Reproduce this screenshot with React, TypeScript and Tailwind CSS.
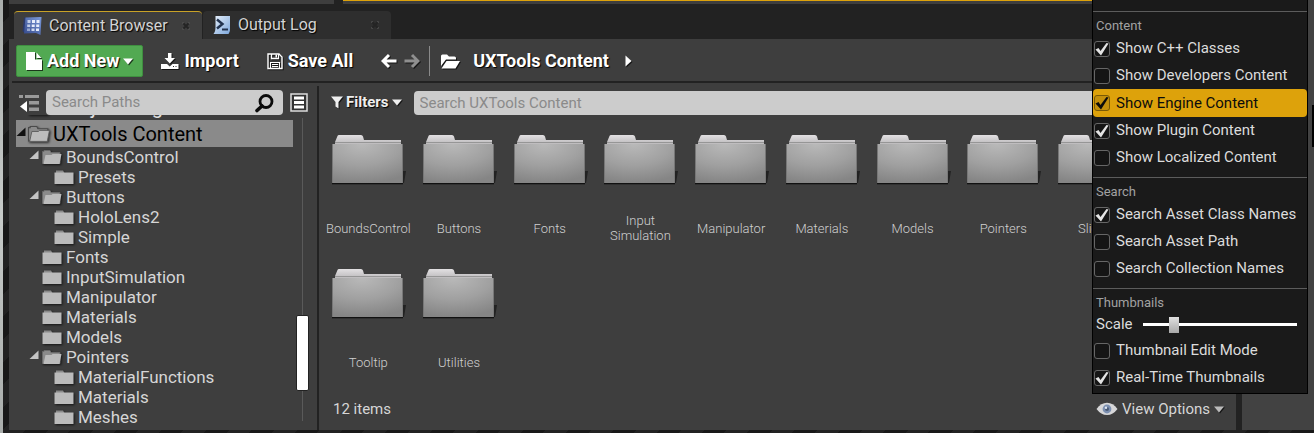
import React, { useState } from "react";

const shadow = "[text-shadow:1px_1px_1px_#000]";
const dropShadow = "drop-shadow-[1px_1px_0_#000000aa]";

function ContentBrowserIcon() {
  return (
    <svg width="20" height="20" viewBox="0 0 20 20" aria-hidden="true">
      <defs>
        <linearGradient id="browser" x1="0" y1="1" x2="1" y2="0">
          <stop offset="0" stopColor="#34498a" />
          <stop offset="1" stopColor="#7c9bdc" />
        </linearGradient>
      </defs>
      <path d="M2 1.500 L5 1.500 L4 17 L0.500 15.500 Z" fill="#2b3a6b" />
      <path d="M3.500 1.500 L19.500 1 L18.500 19 L14 17 L2 17.500 Z" fill="url(#browser)" />
      <g fill="#e6edfb">
        <rect x="5.500" y="4" width="3" height="3" opacity="0.75" />
        <rect x="10" y="4" width="3" height="3" />
        <rect x="14.500" y="4" width="3" height="3" />
        <rect x="5.200" y="8.500" width="3" height="2.500" opacity="0.75" />
        <rect x="9.700" y="8.500" width="3" height="2.500" />
        <rect x="14.200" y="8.500" width="3" height="2.500" />
        <rect x="5" y="12.500" width="3" height="2.500" opacity="0.5" />
        <rect x="9.500" y="12.500" width="3" height="2.500" opacity="0.85" />
        <rect x="14" y="12.500" width="3" height="2.500" />
      </g>
    </svg>
  );
}

function OutputLogIcon() {
  return (
    <svg width="18" height="20" viewBox="0 0 18 20" aria-hidden="true">
      <defs>
        <linearGradient id="log" x1="0" y1="0" x2="1" y2="1">
          <stop offset="0" stopColor="#e8f1fb" />
          <stop offset="1" stopColor="#7da7dc" />
        </linearGradient>
      </defs>
      <path d="M2.500 1 H17 V14 C17 16 16.500 17.500 15.500 19 H0.500 C2 17 2.500 15 2.500 12 Z" fill="url(#log)" />
      <path d="M4 4.500 L9.500 9 L4 13.500" fill="none" stroke="#22334f" strokeWidth="2.400" />
      <path d="M9 14.500 H15" stroke="#22334f" strokeWidth="2" />
    </svg>
  );
}

function CloseIcon() {
  return (
    <svg width="8" height="8" viewBox="0 0 8 8" aria-hidden="true">
      <path d="M1.500 1.500 L6.500 6.500 M6.500 1.500 L1.500 6.500" stroke="#242424" strokeWidth="1.800" />
      <path d="M0.500 2 V0.500 H2 M6 0.500 H7.500 V2 M7.500 6 V7.500 H6 M2 7.500 H0.500 V6" fill="none" stroke="#515151" strokeWidth="0.700" />
    </svg>
  );
}

function FileIcon() {
  return (
    <svg className={dropShadow} width="17" height="19" viewBox="0 0 17 19" aria-hidden="true">
      <path d="M0 0 H9 V7.500 H16 V18 H0 Z" fill="#fff" />
      <path d="M10.500 0.500 L15.500 6 H10.500 Z" fill="#fff" />
    </svg>
  );
}

function Caret({ className = "" }: { className?: string }) {
  return (
    <svg className={`${dropShadow} ${className}`} width="10" height="7" viewBox="0 0 10 7" aria-hidden="true">
      <path d="M0 0.500 H10 L5 6.500 Z" fill="currentColor" />
    </svg>
  );
}

function ImportIcon() {
  return (
    <svg className={dropShadow} width="18" height="17" viewBox="0 0 18 17" aria-hidden="true">
      <path d="M7 0 H10.500 V5 H14 L8.800 10.500 L3.500 5 H7 Z" fill="#fff" />
      <path d="M0 11 H6 L8.800 13.500 L11.500 11 H17.500 V16 H0 Z" fill="#fff" />
      <path d="M12 13.500 H13 M14.500 13.500 H15.500" stroke="#333" />
    </svg>
  );
}

function SaveIcon() {
  return (
    <svg className={dropShadow} width="17" height="17" viewBox="0 0 17 17" aria-hidden="true">
      <path d="M1 1 H12 L15 4 V15.500 H1 Z" fill="none" stroke="#fff" strokeWidth="1.400" />
      <path d="M4.500 1 V5.500 H11.500 V1" fill="none" stroke="#fff" strokeWidth="1.300" />
      <path d="M8.500 1.500 H10 V4.500 H8.500Z" fill="#fff" />
      <path d="M3.500 15 V9.500 H12.500 V15 M5 11.500 H11 M5 13.500 H11" fill="none" stroke="#fff" strokeWidth="1.100" />
    </svg>
  );
}

function ArrowIcon({ forward = false }: { forward?: boolean }) {
  return (
    <svg className={dropShadow} width="16" height="16" viewBox="0 0 16 16" aria-hidden="true">
      <path
        d={forward ? "M0.500 8 H13 M8 2 L14 8 L8 14" : "M15.500 8 H3 M8 2 L2 8 L8 14"}
        fill="none"
        stroke={forward ? "#8f8f8f" : "#fff"}
        strokeWidth="3"
      />
    </svg>
  );
}

function OpenFolderIcon() {
  return (
    <svg className={dropShadow} width="19" height="15" viewBox="0 0 19 15" aria-hidden="true">
      <path d="M0 12 V2 Q0 0.500 1.500 0.500 H6 L8 2.500 H13.500 Q15 2.500 15 4 V5.500 H5 Z" fill="#fff" />
      <path d="M5.500 7 H19 L14.500 14.500 H0.500 Z" fill="#fff" />
    </svg>
  );
}

function CollapseIcon() {
  return (
    <svg width="20" height="18" viewBox="0 0 20 18" aria-hidden="true">
      <g fill="#9a9a9a">
        <rect x="0" y="1" width="4" height="3" />
        <rect x="6" y="1" width="14" height="3" />
        <rect x="10" y="7" width="10" height="3.500" />
        <rect x="10" y="13.500" width="10" height="3.500" />
      </g>
      <path d="M8 7 V18 L1 12.500 Z" fill="#fff" />
    </svg>
  );
}

function SearchIcon() {
  return (
    <svg width="20" height="20" viewBox="0 0 20 20" aria-hidden="true">
      <circle cx="11" cy="8.500" r="6" fill="none" stroke="#0b0b0b" strokeWidth="2.800" />
      <path d="M7 13 L2 17.500" stroke="#0b0b0b" strokeWidth="3.600" strokeLinecap="round" />
    </svg>
  );
}

function SourcesIcon() {
  return (
    <svg width="18" height="19" viewBox="0 0 18 19" aria-hidden="true">
      <rect x="1" y="1" width="16" height="17" fill="#333" stroke="#ddd" strokeWidth="1.500" />
      <g fill="#fff">
        <rect x="4" y="3.500" width="10" height="3" />
        <rect x="4" y="8" width="10" height="3" />
        <rect x="4" y="12.500" width="10" height="3" />
      </g>
    </svg>
  );
}

function FilterIcon() {
  return (
    <svg className={dropShadow} width="12" height="13" viewBox="0 0 12 13" aria-hidden="true">
      <path d="M0 0.500 H12 L7.500 6 V12.500 L4.500 10.500 V6 Z" fill="#eee" />
    </svg>
  );
}

function TreeFolder({ open, outlined, size = 20 }: { open?: boolean; outlined?: boolean; size?: number }) {
  return (
    <svg className="shrink-0 drop-shadow-[1px_1px_1px_#000000aa]" width={size} height={size * 0.75} viewBox="0 0 20 15" aria-hidden="true">
      {open ? (
        <>
          <path d="M0.500 13.500 V1.500 H2 V0.500 H8 L9 2.500 H18 V13.500 Z" fill="#8b8b8b" stroke={outlined ? "#4a4a4a" : "#6a6a6a"} />
          <path
            d="M3.500 5 H9.500 L10.500 4 H19.500 L17.500 14 H1.500 Z"
            fill="#bcbcbc"
            stroke={outlined ? "#5a5a5a" : "none"}
            strokeWidth="0.800"
          />
        </>
      ) : (
        <>
          <path d="M2 3 V0.500 H9 L10.500 3 Z" fill="#8b8b8b" />
          <path d="M0.500 2.500 H19.500 V14 H0.500 Z" fill="#bbb" />
        </>
      )}
    </svg>
  );
}

function Expander({ color }: { color: string }) {
  return (
    <svg className="shrink-0" width="10" height="10" viewBox="0 0 10 10" aria-hidden="true">
      <path d="M9.500 0.500 V9 H0.500 Z" fill={color} />
    </svg>
  );
}

function BigFolder() {
  return (
    <svg width="76" height="50" viewBox="0 0 76 50" aria-hidden="true">
      <defs>
        <radialGradient id="front" cx="0.42" cy="0" r="1">
          <stop offset="0" stopColor="#b9b9b9" />
          <stop offset="0.55" stopColor="#a0a0a0" />
          <stop offset="1" stopColor="#858585" />
        </radialGradient>
        <linearGradient id="tab" x1="0" y1="0" x2="0" y2="1">
          <stop offset="0" stopColor="#e2e0e2" />
          <stop offset="1" stopColor="#bdbbbd" />
        </linearGradient>
      </defs>
      <path d="M72 36 H76 L74 48 H72 Z" fill="#222" />
      <path d="M5 9 V7 L7.500 1 Q7.800 0 9 0 H31 Q32.500 0 33 1.500 L34 5 H71 V9 Z" fill="url(#tab)" />
      <path d="M5 7.500 H71" stroke="#969696" />
      <rect x="2" y="48" width="71" height="1.300" fill="#111" />
      <rect x="2" y="9" width="71" height="39" fill="url(#front)" />
      <path d="M2.500 9 V48 M72.500 9 V48" stroke="#777" />
    </svg>
  );
}

function EyeIcon() {
  return (
    <svg width="22" height="14" viewBox="0 0 22 14" aria-hidden="true">
      <path d="M0.500 7 Q5 0.800 11 0.800 Q17 0.800 21.500 7 Q17 13 11 13 Q5 13 0.500 7 Z" fill="#d6d6d8" />
      <circle cx="11" cy="7" r="4.400" fill="#7b8fb0" />
      <circle cx="11" cy="7" r="2" fill="#4a5a75" />
      <circle cx="10" cy="5.800" r="1.200" fill="#dfe7f2" />
    </svg>
  );
}

type Node = { name: string; depth: number; open?: boolean };

const tree: Node[] = [
  { name: "BoundsControl", depth: 1, open: true },
  { name: "Presets", depth: 2 },
  { name: "Buttons", depth: 1, open: true },
  { name: "HoloLens2", depth: 2 },
  { name: "Simple", depth: 2 },
  { name: "Fonts", depth: 1 },
  { name: "InputSimulation", depth: 1 },
  { name: "Manipulator", depth: 1 },
  { name: "Materials", depth: 1 },
  { name: "Models", depth: 1 },
  { name: "Pointers", depth: 1, open: true },
  { name: "MaterialFunctions", depth: 2 },
  { name: "Materials", depth: 2 },
  { name: "Meshes", depth: 2 },
];

const folders = [
  "BoundsControl",
  "Buttons",
  "Fonts",
  "Input Simulation",
  "Manipulator",
  "Materials",
  "Models",
  "Pointers",
  "Slider",
  "",
  "Tooltip",
  "Utilities",
];

function Tab({ icon, label, active }: { icon: React.ReactNode; label: string; active?: boolean }) {
  return (
    <div
      className={`flex h-7 w-[188px] items-center rounded-t-sm pr-3 ${
        active ? "border-t border-[#c9a227] bg-[#3e3e3e] pl-2" : "bg-[#2e2e2e] pl-[10px]"
      }`}
    >
      <button type="button" className={`flex items-center gap-[7px] text-base text-[#d4d4d4] ${shadow}`}>
        {icon}
        {label}
      </button>
      <button type="button" aria-label={`Close ${label}`} className="ml-auto">
        <CloseIcon />
      </button>
    </div>
  );
}

function RootRow({ name, selected }: { name: string; selected?: boolean }) {
  return (
    <li
      className={`flex h-[27px] items-center text-xl ${
        selected ? "bg-[#8a8a8a] text-black" : "text-[#e0e0e0]"
      }`}
    >
      <span className="flex pb-1">
        <Expander color={selected ? "#111" : "#ccc"} />
      </span>
      <span className="mx-[2px] flex pt-[2px]">
        <TreeFolder open outlined size={22} />
      </span>
      <span className="pl-px pt-px">{name}</span>
    </li>
  );
}

function TreeRow({ node }: { node: Node }) {
  return (
    <li className={`flex h-5 items-center text-[17px] text-[#d6d6d6] ${node.depth === 2 ? "pl-6" : "pl-3"}`}>
      <span className="flex w-[14px] shrink-0 pb-1 pl-px">{node.open && <Expander color="#c4c4c4" />}</span>
      <TreeFolder open={node.open} />
      <span className="pl-1 pt-[2px]">{node.name}</span>
    </li>
  );
}

function CheckRow({ label, initial, highlighted }: { label: string; initial?: boolean; highlighted?: boolean }) {
  const [checked, setChecked] = useState(!!initial);
  return (
    <label
      className={`flex items-center gap-[6px] rounded-sm pl-px text-[15px] ${
        highlighted ? "h-7 bg-[#dda20b] text-[#0c0c0c]" : "h-[27px] text-[#dcdcdc]"
      }`}
    >
      <span className="relative flex">
        <input
          type="checkbox"
          checked={checked}
          onChange={(e) => setChecked(e.target.checked)}
          className={`size-4 appearance-none rounded-[3px] border ${
            highlighted ? "border-[#7a5a06] bg-[#c4900c]" : "border-[#666] bg-[#151515]"
          }`}
        />
        {checked && (
          <svg className="pointer-events-none absolute inset-0" width="16" height="16" viewBox="0 0 16 16" aria-hidden="true">
            <path d="M1.500 8.500 L4.500 7 L6.500 10 L12.500 2 L14.500 2.500 L7 14.500 Z" fill={highlighted ? "#0c0c0c" : "#e4e4e4"} />
          </svg>
        )}
      </span>
      {label}
    </label>
  );
}

function MenuSection({ title, children, last }: { title: string; children: React.ReactNode; last?: boolean }) {
  return (
    <section className={`border-t border-[#5c5c5c] ${last ? "pb-[2px]" : "pb-[6px]"}`}>
      <h3 className="flex h-[23px] items-center pl-[3px] pt-1 text-[13px] text-[#a2a2a2]">{title}</h3>
      {children}
    </section>
  );
}

function ViewMenu() {
  return (
    <div className="absolute bottom-full left-0 z-10 w-[216px] border border-black bg-[#1a1a1a] pt-4">
      <MenuSection title="Content">
        <CheckRow label="Show C++ Classes" initial />
        <CheckRow label="Show Developers Content" />
        <CheckRow label="Show Engine Content" initial highlighted />
        <CheckRow label="Show Plugin Content" initial />
        <CheckRow label="Show Localized Content" />
      </MenuSection>
      <MenuSection title="Search">
        <CheckRow label="Search Asset Class Names" initial />
        <CheckRow label="Search Asset Path" />
        <CheckRow label="Search Collection Names" />
      </MenuSection>
      <MenuSection title="Thumbnails" last>
        <label className="flex h-[25px] items-center gap-[10px] pl-[3px] pr-[10px] text-[15px] text-[#dcdcdc]">
          Scale
          <input
            type="range"
            min="0"
            max="100"
            defaultValue="18"
            className="h-4 min-w-0 flex-1 appearance-none bg-[linear-gradient(#fff,#fff)] bg-[length:100%_3px] bg-center bg-no-repeat [&::-webkit-slider-thumb]:h-4 [&::-webkit-slider-thumb]:w-[10px] [&::-webkit-slider-thumb]:appearance-none [&::-webkit-slider-thumb]:bg-[linear-gradient(#e0e0e0,#a8a8a8)]"
          />
        </label>
        <CheckRow label="Thumbnail Edit Mode" />
        <CheckRow label="Real-Time Thumbnails" initial />
      </MenuSection>
    </div>
  );
}

function Toolbar() {
  const action = `flex items-center text-lg font-bold ${shadow}`;
  return (
    <div className="ml-[3px] flex h-11 items-center border-b-2 border-[#222] pl-1 pt-[2px] text-white">
      <button type="button" className={`flex h-8 items-center gap-1 rounded-[2px] border border-[#3f8f40] bg-[#52a952] px-[9px] text-lg font-bold ${shadow}`}>
        <FileIcon />
        Add New
        <Caret />
      </button>
      <button type="button" className={`ml-[18px] gap-[5px] ${action}`}>
        <ImportIcon />
        Import
      </button>
      <button type="button" className={`ml-7 gap-1 ${action}`}>
        <SaveIcon />
        Save All
      </button>
      <button type="button" aria-label="Back" className="ml-7">
        <ArrowIcon />
      </button>
      <button type="button" aria-label="Forward" className="ml-[7px]">
        <ArrowIcon forward />
      </button>
      <span className="ml-[9px] h-[30px] w-px bg-[#8a8a8a]" />
      <button type="button" aria-label="Choose path" className="ml-[11px]">
        <OpenFolderIcon />
      </button>
      <a href="#content" className={`ml-[13px] text-lg font-bold ${shadow}`}>
        UXTools Content
      </a>
      <svg className={`ml-4 ${dropShadow}`} width="7" height="12" viewBox="0 0 7 12" aria-hidden="true">
        <path d="M0.500 0.500 L6.500 6 L0.500 11.500 Z" fill="#fff" />
      </svg>
    </div>
  );
}

function Sources() {
  return (
    <aside className="flex w-[308px] shrink-0 flex-col pt-[7px]">
      <div className="flex items-center gap-[7px] pl-[10px] pr-[9px]">
        <button type="button" aria-label="Hide sources">
          <CollapseIcon />
        </button>
        <label className="flex h-[25px] min-w-0 flex-1 items-center rounded-sm bg-[#ccc] pl-[6px] pr-2">
          <input
            type="text"
            aria-label="Search Paths"
            placeholder="Search Paths"
            className="min-w-0 flex-1 bg-transparent text-[15px] outline-none placeholder:text-[#8a8a8a]"
          />
          <SearchIcon />
        </label>
        <button type="button" aria-label="Collections">
          <SourcesIcon />
        </button>
      </div>
      <div className="flex flex-1 overflow-hidden pb-[3px] pl-[7px] pr-2">
        <ul className="-mt-[22px] flex-1">
          <RootRow name="UObjectPlugin Content" />
          <RootRow name="UXTools Content" selected />
          {tree.map((node, i) => (
            <TreeRow key={i} node={node} />
          ))}
        </ul>
        <div className="ml-[3px] flex w-[13px] flex-col items-center pb-[6px] pt-[3px]">
          <span className="w-px flex-1 bg-[#5a5a5a]" />
          <span className="h-[76px] w-full rounded-[2px] border border-[#222] bg-white" />
          <span className="h-[30px] w-px bg-[#5a5a5a]" />
        </div>
      </div>
    </aside>
  );
}

function Assets() {
  return (
    <main id="content" className="mt-[3px] flex min-w-0 flex-1 flex-col border-l-2 border-[#222] pt-[5px]">
      <div className="flex items-center gap-3 pl-3 pr-[6px]">
        <button type="button" className={`flex items-center gap-[3px] pb-px text-[15px] font-bold text-[#eee] ${shadow}`}>
          <FilterIcon />
          Filters
          <Caret />
        </button>
        <input
          type="text"
          aria-label="Search UXTools Content"
          placeholder="Search UXTools Content"
          className="h-6 min-w-0 flex-1 rounded-sm bg-[#ccc] px-[6px] text-[15px] outline-none placeholder:text-[#8a8a8a]"
        />
      </div>
      <ul className="grid grid-cols-10 gap-y-[21px] pl-1 pr-[6px] pt-5">
        {folders.map((name, i) => (
          <li key={i} className="flex flex-col items-center">
            <BigFolder />
            <span className="mt-[23px] flex h-10 w-20 items-center justify-center text-center text-[13px] leading-[15px] font-light text-[#d0d0d0]">
              {name}
            </span>
          </li>
        ))}
      </ul>
      <div className="mt-auto flex h-9 items-start justify-between pl-[14px] text-[15px] text-[#d6d6d6]">
        <span className="flex h-[30px] items-center">12 items</span>
        <div className="relative w-36">
          <button type="button" aria-haspopup="menu" aria-expanded="true" className="flex h-[30px] items-center gap-1 pl-1">
            <EyeIcon />
            View Options
            <Caret className="text-[#bbb]" />
          </button>
          <ViewMenu />
        </div>
      </div>
    </main>
  );
}

export default function App() {
  return (
    <div className="flex min-h-screen w-full overflow-hidden bg-[#222] font-['Roboto',sans-serif]">
      <div className="w-[3px] shrink-0 bg-[linear-gradient(#a9adab,#c6cac8,#a9adab)]" />
      <div className="flex min-w-0 flex-1 flex-col bg-[repeating-linear-gradient(135deg,#181818_0_16px,#222_16px_32px)]">
        <div className="flex flex-1 pl-[6px]">
          <div className="flex min-w-0 flex-1 flex-col bg-[#222]">
            <div className="flex h-1 gap-[9px]">
              <div className="w-[325px] bg-[#3e3e3e]" />
              <div className="flex-1 border-t border-[#dda20b] bg-[#3e3e3e]" />
            </div>
            <div className="mt-[7px] flex gap-px pl-[5px]">
              <Tab active icon={<ContentBrowserIcon />} label="Content Browser" />
              <Tab icon={<OutputLogIcon />} label="Output Log" />
            </div>
            <div className="flex flex-1 flex-col bg-[#3e3e3e]">
              <Toolbar />
              <div className="flex flex-1">
                <Sources />
                <Assets />
              </div>
            </div>
          </div>
          <div className="w-[6px] bg-[#222]" />
          <div className="flex w-[72px] justify-end bg-[#424242] pt-[105px]">
            <span className="h-[42px] w-[2px] bg-black" />
          </div>
        </div>
        <div className="h-[3px]" />
      </div>
    </div>
  );
}
